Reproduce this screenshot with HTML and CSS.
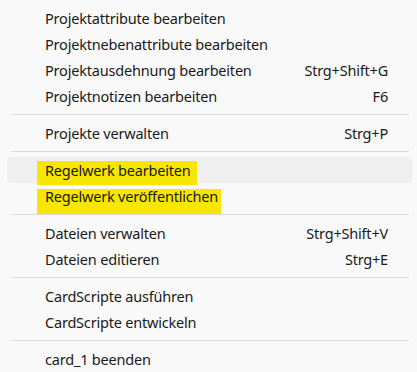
FILE: index.html
```html
<!DOCTYPE html>
<html lang="de">
<head>
<meta charset="utf-8">
<title>Menü</title>
<link rel="stylesheet" href="styles.css">
</head>
<body>
<div class="menu">
  <div class="item"><span class="label">Projektattribute bearbeiten</span></div>
  <div class="item"><span class="label">Projektnebenattribute bearbeiten</span></div>
  <div class="item"><span class="label">Projektausdehnung bearbeiten</span><span class="key">Strg+Shift+G</span></div>
  <div class="item"><span class="label">Projektnotizen bearbeiten</span><span class="key">F6</span></div>
  <div class="sep"></div>
  <div class="item"><span class="label">Projekte verwalten</span><span class="key">Strg+P</span></div>
  <div class="sep"></div>
  <div class="item hover"><span class="label mark mark-a">Regelwerk bearbeiten</span></div>
  <div class="item"><span class="label mark mark-b">Regelwerk veröffentlichen</span></div>
  <div class="sep"></div>
  <div class="item"><span class="label">Dateien verwalten</span><span class="key">Strg+Shift+V</span></div>
  <div class="item"><span class="label">Dateien editieren</span><span class="key">Strg+E</span></div>
  <div class="sep"></div>
  <div class="item"><span class="label">CardScripte ausführen</span></div>
  <div class="item"><span class="label">CardScripte entwickeln</span></div>
  <div class="sep"></div>
  <div class="item"><span class="label">card_1 beenden</span></div>
</div>
</body>
</html>
```
FILE: styles.css
```css
html, body {
  margin: 0;
  padding: 0;
  background: #f9f9f9;
}
body {
  font-family: "Noto Sans", "Open Sans", sans-serif;
  font-size: 14.5px;
  letter-spacing: -0.2px;
  color: #1a1a1a;
  overflow: hidden;
}
.menu {
  display: flex;
  flex-direction: column;
  padding-top: 5px;
}
.item {
  display: flex;
  justify-content: space-between;
  align-items: flex-start;
  height: 26px;
  line-height: 26px;
  margin: 0 4px 0 7px;
  padding: 0 25px 0 38px;
  border-radius: 5px;
  white-space: nowrap;
}
.item.hover {
  background: #efefef;
}
.label {
  position: relative;
  z-index: 0;
}
.mark::before {
  content: "";
  position: absolute;
  z-index: -1;
  left: -8px;
  background: #f6e600;
}
.mark-a::before {
  top: 4px;
  height: 24px;
  right: -6px;
}
.mark-b::before {
  top: 6px;
  height: 25px;
  right: -3px;
}
.key {
  text-align: right;
}
.sep {
  height: 1px;
  background: #dadada;
  margin: 5px 8px 5px 11px;
}
```
